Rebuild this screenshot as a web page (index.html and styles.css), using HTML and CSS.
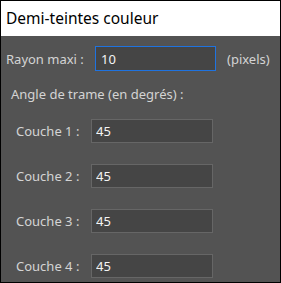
FILE: index.html
```html
<!DOCTYPE html>
<html lang="fr">
<head>
    <meta charset="UTF-8">
    <meta name="viewport" content="width=device-width, initial-scale=1.0">
    <title>Demi-teintes couleur</title>
    <link rel="stylesheet" href="styles.css">
</head>
<body>
    <div class="dialog">
        <div class="title-bar">Demi-teintes couleur</div>

        <div class="panel">
            <div class="radius-row">
                <label for="radius" class="radius-label">Rayon maxi :</label>
                <input type="text" id="radius" class="field field-focus" value="10">
                <span class="unit">(pixels)</span>
            </div>

            <div class="section-label">Angle de trame (en degrés) :</div>

            <div class="layer-row">
                <label for="layer1" class="layer-label">Couche 1 :</label>
                <input type="text" id="layer1" class="field" value="45">
            </div>
            <div class="layer-row">
                <label for="layer2" class="layer-label">Couche 2 :</label>
                <input type="text" id="layer2" class="field" value="45">
            </div>
            <div class="layer-row">
                <label for="layer3" class="layer-label">Couche 3 :</label>
                <input type="text" id="layer3" class="field" value="45">
            </div>
            <div class="layer-row">
                <label for="layer4" class="layer-label">Couche 4 :</label>
                <input type="text" id="layer4" class="field" value="45">
            </div>
        </div>
    </div>
</body>
</html>
```

FILE: styles.css
```css
html, body {
    margin: 0;
    padding: 0;
}
body {
    font-family: "Noto Sans", "Open Sans", sans-serif;
    font-size: 13px;
    color: #d4d4d4;
}
.dialog {
    box-sizing: border-box;
    width: 281px;
    height: 283px;
    border: 1px solid #000;
    background: #535353;
    display: flex;
    flex-direction: column;
}
.title-bar {
    height: 35px;
    background: #fff;
    color: #000;
    font-size: 15.5px;
    line-height: 35px;
    padding-left: 5px;
}
.panel {
    display: flex;
    flex-direction: column;
    padding-top: 10px;
}
.radius-row {
    display: flex;
    align-items: center;
    height: 25px;
}
.radius-label {
    width: 89px;
    padding-left: 5px;
}
.unit {
    margin-left: 11px;
}
.section-label {
    margin-top: 14px;
    padding-left: 10px;
    line-height: 19px;
}
.layer-row {
    display: flex;
    align-items: center;
    height: 24px;
    margin-top: 21px;
}
.section-label + .layer-row {
    margin-top: 15px;
}
.layer-label {
    width: 75px;
    padding-left: 15px;
}
.field {
    box-sizing: border-box;
    width: 122px;
    height: 24px;
    margin: 0;
    padding: 0 4px;
    border: 1px solid #666;
    background: #454545;
    color: #f4f4f4;
    font-family: inherit;
    font-size: 13px;
    outline: none;
}
.field-focus {
    width: 121px;
    height: 25px;
    padding-left: 5px;
    border-color: #1f73e0;
}
```
